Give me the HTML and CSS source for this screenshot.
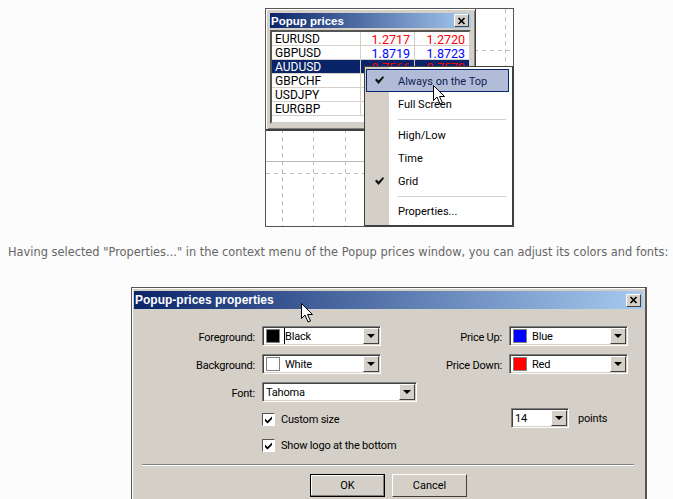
FILE: index.html
```html
<!DOCTYPE html>
<html lang="en">
<head>
    <meta charset="UTF-8">
    <meta name="viewport" content="width=device-width, initial-scale=1.0">
    <title>Popup prices</title>
    <link rel="stylesheet" href="styles.css">
</head>
<body>
    <div class="shot">
        <div class="chart">
            <div class="popup">
                <div class="titlebar popup-title">
                    <span>Popup prices</span>
                    <span class="close-btn"><svg width="9" height="8" viewBox="0 0 9 8"><path d="M1.500 1l6 6M7.500 1l-6 6" fill="none" stroke="#000" stroke-width="1.700"/></svg></span>
                </div>
                <div class="quotes">
                    <table>
                        <tr><td>EURUSD</td><td class="num up">1.2717</td><td class="num up">1.2720</td></tr>
                        <tr><td>GBPUSD</td><td class="num down">1.8719</td><td class="num down">1.8723</td></tr>
                        <tr class="selected"><td>AUDUSD</td><td class="num up">0.7566</td><td class="num up">0.7570</td></tr>
                        <tr><td>GBPCHF</td><td></td><td></td></tr>
                        <tr><td>USDJPY</td><td></td><td></td></tr>
                        <tr><td>EURGBP</td><td></td><td></td></tr>
                    </table>
                </div>
            </div>
            <div class="menu">
                <div class="menu-item hover"><span class="tick"><svg width="9" height="8" viewBox="0 0 9 8"><path d="M0 4l1.500-1.500L3.500 4.500 8 0l1 1.500L3.500 8z" fill="#111"/></svg></span>Always on the Top</div>
                <div class="menu-item">Full Screen</div>
                <div class="menu-sep"></div>
                <div class="menu-item">High/Low</div>
                <div class="menu-item">Time</div>
                <div class="menu-item"><span class="tick"><svg width="9" height="8" viewBox="0 0 9 8"><path d="M0 4l1.500-1.500L3.500 4.500 8 0l1 1.500L3.500 8z" fill="#111"/></svg></span>Grid</div>
                <div class="menu-sep menu-sep-last"></div>
                <div class="menu-item">Properties...</div>
            </div>
            <svg class="cursor cursor-menu" width="13" height="20" viewBox="0 0 13 20"><path d="M.5.500v15l3.500-3.500 3 7 2.500-1-3-6.500h5z" fill="#fff" stroke="#000"/></svg>
        </div>
    </div>

    <p class="caption">Having selected "Properties..." in the context menu of the Popup prices window, you can adjust its colors and fonts:</p>

    <div class="dialog">
        <div class="titlebar dialog-title">
            <span>Popup-prices properties</span>
            <span class="close-btn"><svg width="9" height="8" viewBox="0 0 9 8"><path d="M1.500 1l6 6M7.500 1l-6 6" fill="none" stroke="#000" stroke-width="1.700"/></svg></span>
        </div>
        <svg class="cursor cursor-dialog" width="13" height="20" viewBox="0 0 13 20"><path d="M.5.500v15l3.500-3.500 3 7 2.500-1-3-6.500h5z" fill="#fff" stroke="#000"/></svg>
        <div class="dialog-body">
            <div class="form-grid">
                <label>Foreground:</label>
                <div class="combo"><span class="swatch swatch-black"></span><span class="combo-text caret">Black</span><span class="combo-btn"></span></div>
                <label>Price Up:</label>
                <div class="combo"><span class="swatch swatch-blue"></span><span class="combo-text">Blue</span><span class="combo-btn"></span></div>

                <label>Background:</label>
                <div class="combo"><span class="swatch swatch-white"></span><span class="combo-text">White</span><span class="combo-btn"></span></div>
                <label>Price Down:</label>
                <div class="combo"><span class="swatch swatch-red"></span><span class="combo-text">Red</span><span class="combo-btn"></span></div>

                <label>Font:</label>
                <div class="combo combo-font"><span class="combo-text">Tahoma</span><span class="combo-btn"></span></div>
            </div>
            <div class="size-row">
                <div class="check"><span class="check-box"><svg width="9" height="9" viewBox="0 0 9 9"><path d="M1 3.500l2.500 2.500L8 1.500v2.500L3.500 8.500 1 6z" fill="#000"/></svg></span>Custom size</div>
                <div class="size-field"><div class="combo combo-size"><span class="combo-text">14</span><span class="combo-btn"></span></div><span>points</span></div>
            </div>
            <div class="check logo-check"><span class="check-box"><svg width="9" height="9" viewBox="0 0 9 9"><path d="M1 3.500l2.500 2.500L8 1.500v2.500L3.500 8.500 1 6z" fill="#000"/></svg></span>Show logo at the bottom</div>
            <div class="separator"></div>
            <div class="buttons">
                <button class="default-btn">OK</button>
                <button>Cancel</button>
            </div>
        </div>
    </div>
</body>
</html>
```

FILE: styles.css
```css
html, body {
    height: 499px;
    overflow: hidden;
}
body {
    margin: 0;
    background-color: #fcfcfc;
    font-family: "DejaVu Sans", sans-serif;
}
.shot {
    padding: 8px 0 0 265px;
}
.chart {
    position: relative;
    box-sizing: border-box;
    width: 249px;
    height: 219px;
    border: 1px solid #555;
    background-color: #fff;
    background-image:
        repeating-linear-gradient(to bottom, #bbb 0 4px, transparent 4px 8px),
        repeating-linear-gradient(to bottom, #bbb 0 4px, transparent 4px 8px),
        repeating-linear-gradient(to bottom, #bbb 0 4px, transparent 4px 8px),
        repeating-linear-gradient(to bottom, #bbb 0 4px, transparent 4px 8px),
        repeating-linear-gradient(to right, #bbb 0 4px, transparent 4px 8px),
        repeating-linear-gradient(to right, #bbb 0 4px, transparent 4px 8px),
        linear-gradient(#bbb, #bbb);
    background-size: 1px 100%, 1px 100%, 1px 100%, 1px 100%, 100% 1px, 100% 1px, 100% 1px;
    background-position: 16px 0, 47px 0, 79px 0, 239px 0, 0 164px, 0 41px, 0 152px;
    background-repeat: no-repeat;
    font-family: Roboto, "Liberation Sans", sans-serif;
}
.popup {
    box-sizing: border-box;
    width: 210px;
    height: 122px;
    padding: 4px;
    background-color: #d4d0c8;
    border: 1px solid #404040;
    border-width: 0 1px 2px 0;
    box-shadow: inset 1px 1px 0 #fff, inset 2px 2px 0 #d4d0c8, inset -1px -1px 0 #808080;
}
.titlebar {
    display: flex;
    align-items: center;
    justify-content: space-between;
    color: #fff;
    font-family: "Liberation Sans", Arial, sans-serif;
    font-size: 12px;
    font-weight: bold;
    background: linear-gradient(to right, #0a246a, #a6caf0);
}
.popup-title {
    height: 15px;
    padding: 0 2px 0 1px;
    font-size: 11.500px;
}
.close-btn {
    display: flex;
    align-items: center;
    justify-content: center;
    box-sizing: border-box;
    width: 15px;
    height: 13px;
    background-color: #d4d0c8;
    border: 1px solid;
    border-color: #fff #404040 #404040 #fff;
}
.quotes {
    box-sizing: border-box;
    height: 94px;
    margin-top: 2px;
    background-color: #fff;
    border: 2px solid;
    border-color: #555 #d4d0c8 #d4d0c8 #555;
}
table {
    width: 100%;
    table-layout: fixed;
    border-collapse: separate;
    border-spacing: 0;
    font-size: 12.500px;
    color: #000;
}
td {
    box-sizing: border-box;
    height: 14px;
    padding: 2px 3px 0;
    line-height: 11px;
    border-right: 1px solid #d4d0c8;
    border-bottom: 1px solid #d4d0c8;
}
td:first-child {
    width: 89px;
    font-size: 12px;
}
td:nth-child(2) {
    width: 54px;
}
td:last-child {
    border-right: none;
}
.num {
    padding-right: 4px;
    text-align: right;
}
.up {
    color: #f00;
}
.down {
    color: #00f;
}
.selected td {
    background-color: #0a246a;
    color: #fff;
}
.selected .up {
    color: #f00;
}
.menu {
    position: absolute;
    left: 98px;
    top: 57px;
    box-sizing: border-box;
    width: 150px;
    height: 161px;
    padding: 2px 3px 0 1px;
    border: 1px solid #404040;
    border-width: 1px 2px 2px 1px;
    background: linear-gradient(to right, #d4d0c8 24px, #fff 24px);
    font-size: 11px;
    color: #000;
}
.menu-item {
    position: relative;
    box-sizing: border-box;
    height: 23px;
    padding-left: 32px;
    line-height: 26px;
}
.hover {
    padding-left: 31px;
    line-height: 24px;
    background-color: #b2bcd9;
    border: 1px solid #0a246a;
    color: #10204f;
}
.tick {
    position: absolute;
    left: 9px;
    top: 8px;
    display: flex;
}
.hover .tick {
    left: 8px;
    top: 6px;
}
.menu-sep {
    height: 1px;
    margin: 4px 3px 3px 32px;
    background-color: #d4d0c8;
}
.menu-sep-last {
    margin-bottom: 2px;
}
.cursor {
    position: absolute;
}
.cursor-menu {
    left: 167px;
    top: 76px;
}
.cursor-dialog {
    left: 169px;
    top: 15px;
}
.caption {
    margin: 0;
    padding-top: 18px;
    padding-left: 8px;
    font-size: 11.400px;
    line-height: 14px;
    color: #666;
    white-space: nowrap;
}
.dialog {
    position: relative;
    box-sizing: border-box;
    width: 516px;
    height: 230px;
    margin: 28px 0 0 131px;
    padding: 3px 2px 0 2px;
    background-color: #d4d0c8;
    border: 1px solid #555;
    border-width: 1px 2px 0 1px;
    box-shadow: inset 1px 1px 0 #fff;
    font-family: Roboto, "Liberation Sans", sans-serif;
    font-size: 11px;
    letter-spacing: -0.200px;
    color: #000;
}
.dialog-title {
    height: 18px;
    padding: 0 2px 0 1px;
    letter-spacing: 0;
}
.dialog-body {
    padding-top: 17px;
}
.form-grid {
    display: grid;
    grid-template-columns: 121px 119px 114px 119px;
    column-gap: 7px;
    row-gap: 8px;
    grid-auto-rows: 20px;
    align-items: center;
}
label {
    padding-top: 2px;
    text-align: right;
}
.combo {
    display: flex;
    align-items: center;
    box-sizing: border-box;
    height: 20px;
    padding-left: 2px;
    background-color: #fff;
    border: 1px solid;
    border-color: #808080 #fff #fff #808080;
    box-shadow: inset 1px 1px 0 #404040, inset -1px -1px 0 #d4d0c8;
}
.combo-font {
    width: 155px;
}
.combo-size {
    width: 58px;
}
.swatch {
    flex: none;
    box-sizing: border-box;
    width: 14px;
    height: 14px;
    margin: 0 4px 0 1px;
    border: 1px solid #808080;
}
.swatch-black {
    background-color: #000;
}
.swatch-white {
    background-color: #fff;
}
.swatch-blue {
    background-color: #00f;
}
.swatch-red {
    background-color: #f00;
}
.combo-text {
    flex: 1;
    padding-left: 1px;
    line-height: 15px;
    padding-top: 1px;
}
.caret {
    padding-left: 0;
    border-left: 1px solid #000;
}
.combo-btn {
    flex: none;
    position: relative;
    box-sizing: border-box;
    width: 16px;
    height: 16px;
    margin-right: 1px;
    background-color: #d4d0c8;
    border: 1px solid;
    border-color: #fff #404040 #404040 #fff;
}
.combo-btn::after {
    content: "";
    position: absolute;
    left: 3px;
    top: 5px;
    border: 4px solid transparent;
    border-top: 4px solid #000;
    border-bottom: none;
}
.size-row {
    display: grid;
    grid-template-columns: 249px auto;
    align-items: center;
    height: 20px;
    margin-top: 6px;
    padding-left: 128px;
}
.size-field {
    display: flex;
    align-items: center;
    gap: 9px;
}
.check {
    display: flex;
    align-items: center;
    gap: 6px;
    padding-top: 2px;
}
.logo-check {
    height: 18px;
    margin-top: 6px;
    margin-left: 128px;
}
.check-box {
    display: flex;
    align-items: center;
    justify-content: center;
    box-sizing: border-box;
    width: 13px;
    height: 13px;
    background-color: #fff;
    border: 1px solid;
    border-color: #555 #fff #fff #555;
}
.separator {
    height: 1px;
    margin: 10px 9px 0 8px;
    background-color: #808080;
    box-shadow: 0 1px 0 #fff;
}
.buttons {
    display: flex;
    justify-content: center;
    gap: 7px;
    margin-top: 9px;
}
button {
    box-sizing: border-box;
    width: 75px;
    height: 23px;
    padding: 0;
    background-color: #d4d0c8;
    border: 1px solid;
    border-color: #fff #404040 #404040 #fff;
    font-family: Roboto, "Liberation Sans", sans-serif;
    font-size: 11px;
    color: #000;
}
.default-btn {
    border: 1px solid #000;
    box-shadow: inset -1px -1px 0 #808080, inset 1px 1px 0 #fff;
}
```
